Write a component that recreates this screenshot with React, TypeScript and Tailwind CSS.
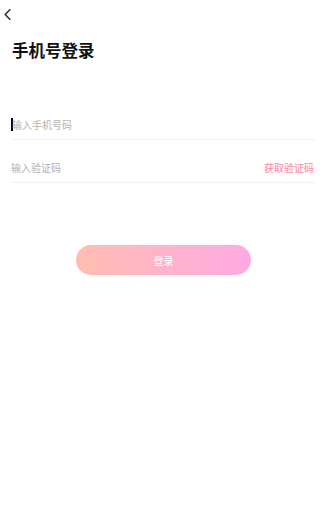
import React, { useState } from 'react';

const font = { fontFamily: '"Noto Sans CJK SC", "Noto Sans", sans-serif' };

const App: React.FC = () => {
  const [phone, setPhone] = useState('');
  const [code, setCode] = useState('');

  return (
    <div className="w-[320px] h-[506px] bg-white text-[#222]" style={font}>
      {/* header */}
      <div className="h-[28px] flex items-center pl-[4px]">
        <svg width="7" height="11" viewBox="0 0 7 11" fill="none">
          <polyline points="5.8,0.8 1.2,5.5 5.8,10.2" stroke="#333" strokeWidth="1.6" strokeLinejoin="round" strokeLinecap="round" />
        </svg>
      </div>

      <h1 className="mt-[10px] pl-[12px] text-[16.5px] leading-[24px] font-bold text-[#111]">手机号登录</h1>

      <div className="mt-[47px] pl-[11px] pr-[4px]">
        <div className="h-[30px] flex items-center border-b border-[#f2f2f2] box-content">
          <span className="w-[1.5px] h-[13px] bg-black" />
          <input
            value={phone}
            onChange={e => setPhone(e.target.value)}
            placeholder="输入手机号码"
            className="flex-1 ml-[-0.5px] bg-transparent outline-none text-[10px] placeholder:text-[#b3b3b3]"
          />
        </div>

        <div className="mt-[12px] h-[30px] flex items-center border-b border-[#f2f2f2] box-content">
          <input
            value={code}
            onChange={e => setCode(e.target.value)}
            placeholder="输入验证码"
            className="flex-1 bg-transparent outline-none text-[10px] placeholder:text-[#b3b3b3]"
          />
          <button className="text-[10px] text-[#ff7fa6] pr-[2px]">获取验证码</button>
        </div>

        <div className="mt-[62px] flex justify-center">
          <button className="w-[175px] h-[30px] rounded-full bg-gradient-to-r from-[#ffbdb0] to-[#ffa9e3] text-white text-[10px]">
            登录
          </button>
        </div>
      </div>
    </div>
  );
};

export default App;
